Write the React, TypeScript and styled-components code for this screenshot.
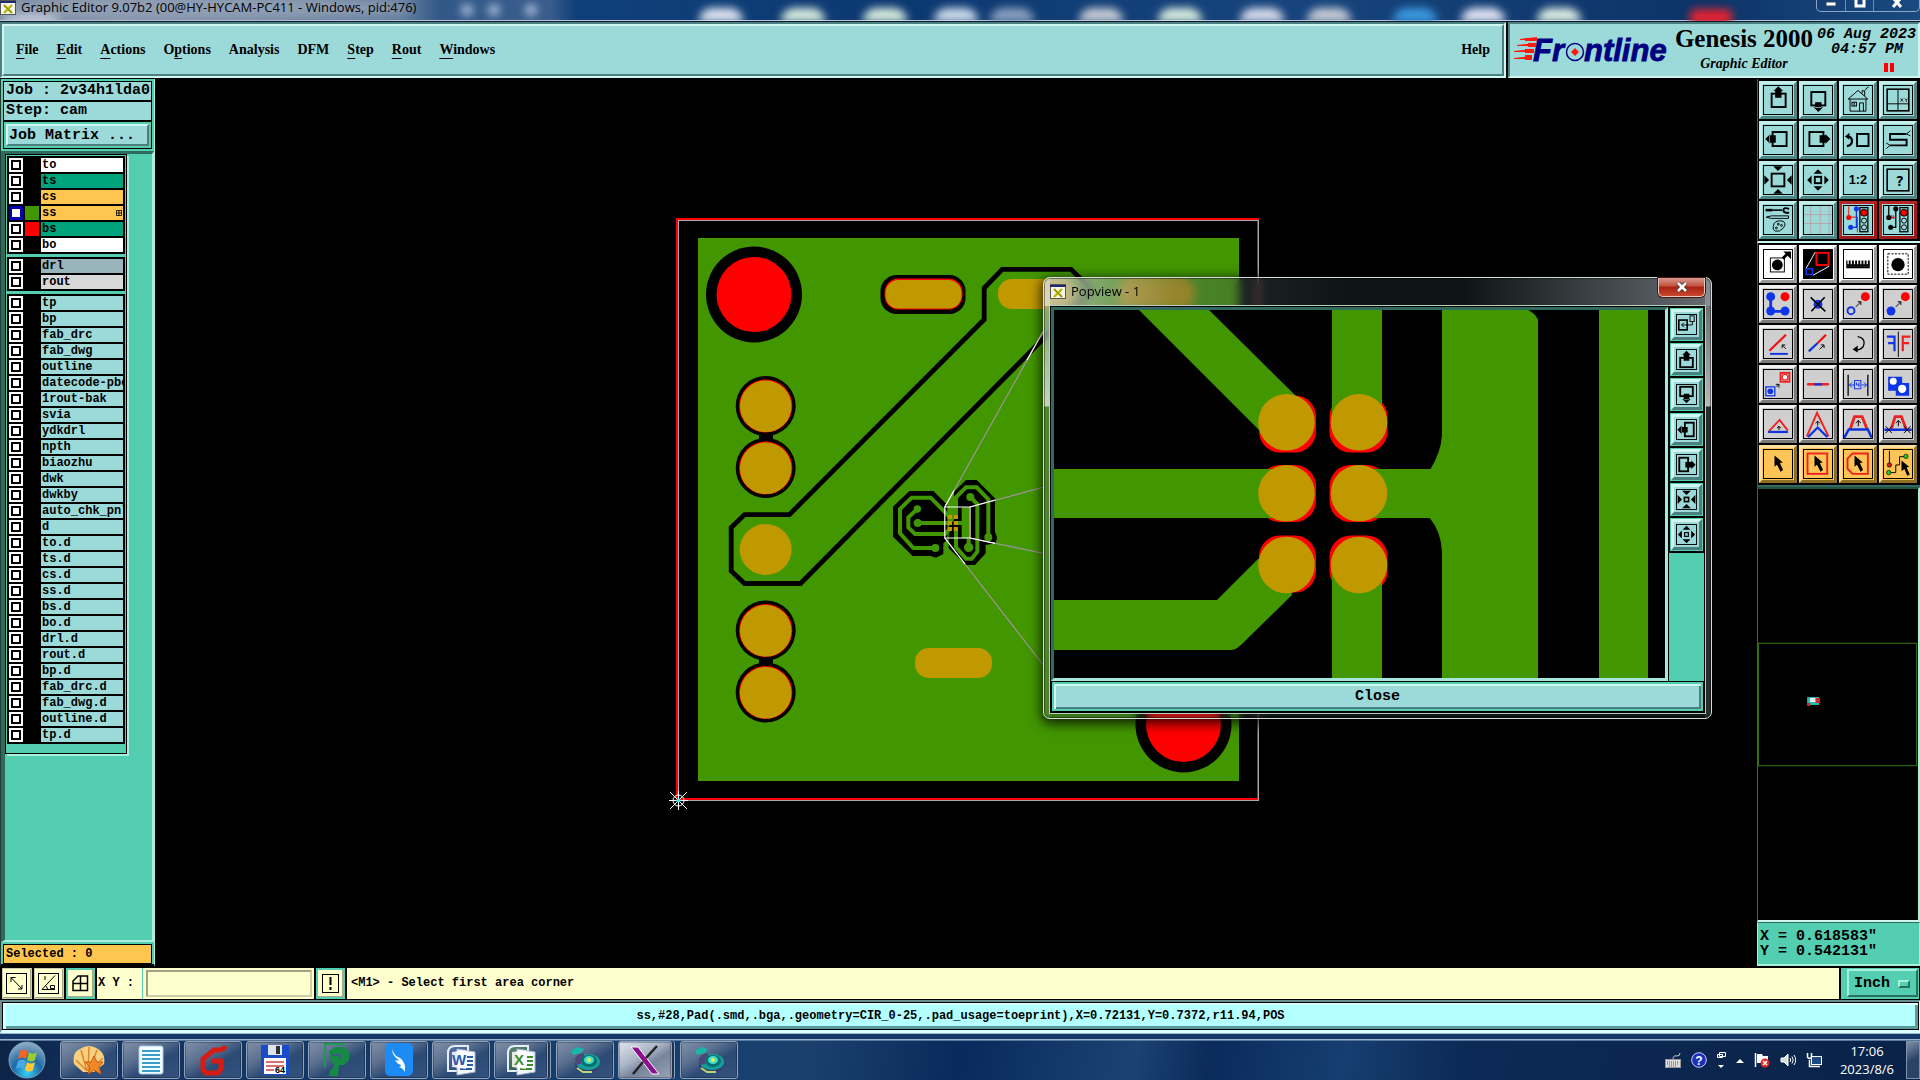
import React from "react";
import styled, { createGlobalStyle, css } from "styled-components";

const MONO = `"Liberation Mono", "DejaVu Sans Mono", monospace`;
const SERIF = `"Liberation Serif", serif`;
const UI = `"Open Sans", "Noto Sans", sans-serif`;

const c = {
  aqua: "#9cdada",
  aquaLight: "#d0f6f2",
  aquaDark: "#4c8080",
  teal: "#54ceb0",
  tealLight: "#a8f0dc",
  tealDark: "#2f6a5c",
  cream: "#ffffce",
  creamDark: "#a9a98a",
  orange: "#ffc64f",
  green: "#429600",
  gold: "#c09800",
  red: "#ff0000",
  blue: "#0f35e8",
};

const Global = createGlobalStyle`
  *, *::before, *::after { box-sizing: border-box; }
  body { margin: 0; background: #000; overflow: hidden; }
  button, input, select { margin: 0; padding: 0; border: 0; border-radius: 0; background: none; color: inherit; font: inherit; outline: 0; }
`;

const bevel = (w: number, light: string, dark: string) => css`
  border: ${w}px solid;
  border-color: ${light} ${dark} ${dark} ${light};
`;

/* ---------- frame ---------- */

const Screen = styled.div`
  display: flex;
  flex-direction: column;
  height: 100vh;
  background: #000;
  color: #000;
  font: bold 12px/14px ${MONO};
`;

const TitleBar = styled.header`
  position: relative;
  display: flex;
  align-items: flex-start;
  flex: none;
  height: 22px;
  overflow: hidden;
  border-bottom: 1px solid #0a1a30;
  box-shadow: inset 0 -1px 0 #b8c8dc;
  background: linear-gradient(90deg, #7888a0 0, #8794aa 120px, #67809f 400px, #325888 440px, #3a5d8c 550px, #10407a 575px, #0c3870 900px, #17447c 1300px, #0c3468 1700px, #1a4a80 100%);
  svg, h1 { z-index: 1; }
`;

const TitleText = styled.h1`
  flex: 1;
  margin: 0;
  padding-left: 5px;
  font: 13px/15px ${UI};
  white-space: nowrap;
`;

const Blurs = styled.svg`
  position: absolute;
  inset: 0;
  width: 100%;
  height: 21px;
  && { z-index: 0; }
`;

const WindowButtons = styled.div`
  display: flex;
  height: 12px;
  border: 1px solid #8ea6c4;
  border-top: 0;
  border-radius: 0 0 5px 5px;
  z-index: 1;
`;

const WindowButton = styled.button<{ $w: number }>`
  display: flex;
  justify-content: center;
  width: ${(p) => p.$w}px;
  & + & { border-left: 1px solid #6f8bb0; }
`;

const TopRow = styled.div`
  display: flex;
  flex: none;
  height: 57px;
  background: #000;
  border-bottom: 1px solid #000;
`;

const Sunken = styled.div`
  ${bevel(2, c.aquaDark, c.aquaLight)}
`;

const MenuFrame = styled(Sunken)`
  flex: 1;
  margin-right: 2px;
`;

const MenuBar = styled.nav`
  display: flex;
  align-items: center;
  gap: 18px;
  height: 100%;
  padding: 0 12px;
  background: ${c.aqua};
  ${bevel(2, c.aquaLight, c.aquaDark)}
  font: bold 14px/18px ${SERIF};
`;

const MenuButton = styled.button<{ $end?: boolean }>`
  margin-left: ${(p) => (p.$end ? "auto" : "0")};
  white-space: nowrap;
  u { text-underline-offset: 4px; text-decoration-thickness: 1px; }
`;

const BrandFrame = styled(Sunken)`
  display: flex;
  width: 412px;
  padding: 1px 2px 0 3px;
  background: ${c.aqua};
`;

const BrandLogo = styled.svg`
  flex: none;
  width: 162px;
  height: 46px;
`;

const BrandNames = styled.div`
  display: flex;
  flex-direction: column;
  align-items: center;
  width: 138px;
  font: bold 25px/28px ${SERIF};
  white-space: nowrap;
  em { font-size: 14px; line-height: 22px; }
`;

const Clock = styled.div`
  display: flex;
  flex: 1;
  flex-direction: column;
  align-items: flex-end;
  padding-top: 2px;
  font: italic bold 15px/15px ${MONO};
  white-space: nowrap;
  span + span { padding-right: 13px; }
`;

const Pause = styled.i`
  width: 10px;
  height: 9px;
  margin: 6px 22px 0 0;
  border: solid ${c.red};
  border-width: 0 4px;
`;

const Main = styled.main`
  display: flex;
  flex: 1;
  min-height: 0;
`;

/* ---------- left column ---------- */

const Side = styled.aside`
  display: flex;
  flex-direction: column;
  width: 155px;
  border: solid;
  border-width: 0 1px 3px 1px;
  border-color: #1c3c34 ${c.tealLight} #000 #1c3c34;
  background: ${c.teal};
`;

const Info = styled.div<{ $bg?: string; $small?: boolean }>`
  height: 20px;
  margin: 0 2px;
  padding-left: 2px;
  border: 1px solid #000;
  background: ${(p) => p.$bg || c.aqua};
  font: bold ${(p) => (p.$small ? 12 : 15)}px/18px ${MONO};
  white-space: pre;
  overflow: hidden;
`;

const InfoStack = styled.div`
  padding-top: 2px;
`;

const MatrixBox = styled.div`
  margin: 0 2px 2px;
  padding: 2px;
  border: 1px solid #000;
`;

const MatrixButton = styled.button`
  width: 100%;
  height: 22px;
  padding-left: 1px;
  background: ${c.aqua};
  ${bevel(2, c.aquaLight, c.aquaDark)}
  font: bold 15px/17px ${MONO};
  text-align: left;
`;

const LayerArea = styled.div`
  flex: 1;
  min-height: 0;
  margin-bottom: 2px;
  border: solid;
  border-width: 3px 2px 2px 4px;
  border-color: ${c.tealDark} ${c.tealLight} ${c.tealLight} ${c.tealDark};
`;

const LayerList = styled.div`
  display: flex;
  flex-direction: column;
  gap: 3px;
  width: 122px;
  padding: 1px 1px 9px;
  border: 1px solid #000;
  box-shadow: 2px 2px 0 ${c.tealLight};
`;

const LayerGroup = styled.div`
  display: flex;
  flex-direction: column;
  gap: 2px;
  padding: 2px;
  background: #000;
`;

const LayerRow = styled.label`
  display: flex;
  gap: 2px;
  height: 14px;
`;

const LayerTick = styled.input`
  appearance: none;
  flex: none;
  width: 14px;
  height: 14px;
  border: 2px solid #fff;
  background: #000;
  box-shadow: inset 0 0 0 2px #000, inset 0 0 0 8px #fff;
  &:checked { border-color: #0000b0; box-shadow: inset 0 0 0 1px #0000b0, inset 0 0 0 8px #fff; }
`;

const Swatch = styled.span<{ $bg?: string }>`
  flex: none;
  width: 14px;
  background: ${(p) => p.$bg || "#000"};
`;

const LayerName = styled.span<{ $bg: string }>`
  display: flex;
  flex: 1;
  align-items: center;
  justify-content: space-between;
  min-width: 0;
  overflow: hidden;
  padding: 0 1px;
  background: ${(p) => p.$bg};
  white-space: nowrap;
`;

/* ---------- centre ---------- */

const Canvas = styled.section`
  position: relative;
  flex: 1;
  min-width: 0;
  overflow: hidden;
`;

const Board = styled.svg`
  display: block;
  width: 100%;
  height: 100%;
`;

const Pop = styled.section`
  position: absolute;
  left: 888px;
  top: 198px;
  display: flex;
  flex-direction: column;
  width: 669px;
  height: 442px;
  padding: 0 6px 5px;
  border: 1px solid #d8dcd8;
  border-radius: 7px;
  background:
    linear-gradient(90deg, rgba(255,255,255,.55) 0, rgba(255,255,255,.1) 130px, rgba(255,255,255,0) 300px, rgba(255,255,255,0) 420px, rgba(160,165,175,.6) 100%) 0 0 / 100% 28px no-repeat,
    linear-gradient(180deg, rgba(255,255,255,.25) 0, rgba(255,255,255,.7) 128px, rgba(255,255,255,.1) 129px, rgba(255,255,255,.1) 100%) 0 0 / 6px 100% no-repeat,
    linear-gradient(180deg, rgba(255,255,255,.3) 0, rgba(255,255,255,.7) 128px, rgba(255,255,255,.1) 129px, rgba(255,255,255,.1) 100%) 100% 0 / 6px 100% no-repeat,
    rgba(40, 60, 60, .35);
  backdrop-filter: blur(5px);
  box-shadow: 0 3px 12px 2px rgba(0,0,0,.75), inset 0 0 0 1px rgba(0,0,0,.4);
`;

const PopTitle = styled.header`
  display: flex;
  flex: none;
  align-items: flex-start;
  height: 28px;
`;

const PopName = styled.h2`
  flex: 1;
  margin: 0;
  padding: 5px 0 0 5px;
  font: 13px/16px ${UI};
`;

const PopIcon = styled.span`
  padding-top: 6px;
`;

const PopX = styled.button`
  display: flex;
  align-items: center;
  justify-content: center;
  width: 47px;
  height: 19px;
  border: 1px solid #e8c8c0;
  border-top: 0;
  border-radius: 0 0 5px 5px;
  background: linear-gradient(#d89a90 0, #c4503c 45%, #a82010 50%, #c84830 100%);
  box-shadow: 0 0 0 1px #401810;
`;

const PopBody = styled.div`
  display: flex;
  flex: 1;
  flex-direction: column;
  min-height: 0;
  border: 1px solid #000;
  box-shadow: 0 0 0 1px #b8d0c0;
  background: #000;
`;

const PopRow = styled.div`
  display: flex;
  flex: 1;
  min-height: 0;
`;

const PopView = styled.div`
  flex: 1;
  min-width: 0;
  border: solid;
  border-width: 3px;
  border-color: ${c.tealDark} #a8e8dc #a8e8dc ${c.tealDark};
`;

const PopTools = styled.div`
  display: flex;
  flex-direction: column;
  gap: 2px;
  width: 35px;
  margin-left: 1px;
  padding-top: 1px;
  background: linear-gradient(#000 0 246px, ${c.teal} 246px);
`;

const PopTool = styled.button`
  flex: none;
  width: 33px;
  height: 33px;
  margin-left: 1px;
  padding: 1px;
  background: ${c.teal};
  svg { display: block; width: 31px; height: 31px; padding: 2px; background: ${c.aqua}; ${bevel(3, c.aquaLight, c.aquaDark)} }
`;

const PopClose = styled.button`
  height: 29px;
  margin: 1px;
  border: 2px solid ${c.teal};
  background: ${c.aqua};
  box-shadow: inset 2px 2px 0 ${c.aquaLight}, inset -2px -2px 0 ${c.aquaDark};
  font: bold 15px/17px ${MONO};
`;

/* ---------- right column ---------- */

const Right = styled.aside`
  display: flex;
  flex-direction: column;
  width: 163px;
`;

const Tools = styled.div<{ $grey?: boolean }>`
  display: grid;
  flex: none;
  grid-template-columns: repeat(4, 38px);
  gap: 2px;
  padding: 2px 0 2px 1px;
  border-left: 1px solid ${(p) => (p.$grey ? "#555" : c.tealDark)};
  border-bottom: 2px solid ${(p) => (p.$grey ? c.tealDark : c.aquaLight)};
  background: #000;
`;

type Tone = "aqua" | "alert" | "white" | "grey" | "orange";
const tones: Record<Tone, [string, string, string]> = {
  aqua: [c.aqua, "#c4efec", "#4f8585"],
  alert: [c.aqua, "#b82424", "#a01818"],
  white: ["#fff", "#fff", "#999"],
  grey: ["#cfcfcf", "#f0f0f0", "#7a7a7a"],
  orange: ["#ffc456", "#ffdf9c", "#8f7020"],
};

const Tool = styled.button<{ $tone: Tone }>`
  width: 38px;
  height: 38px;
  padding: 1px;
  background: ${(p) => tones[p.$tone][0]};
  ${(p) => bevel(3, tones[p.$tone][1], tones[p.$tone][2])}
  svg { display: block; width: 30px; height: 30px; border: 1px solid #000; }
`;

const Overview = styled.svg`
  flex: 1;
  min-height: 0;
  width: 100%;
  border: solid;
  border-width: 2px 2px 2px 1px;
  border-color: #235044 ${c.tealLight} ${c.aquaLight} ${c.tealDark};
`;

const Coords = styled.div`
  flex: none;
  height: 44px;
  margin-bottom: 1px;
  padding: 6px 2px 0;
  background: ${c.teal};
  border: solid;
  border-width: 1px 1px 2px 1px;
  border-color: ${c.tealDark} ${c.tealLight} ${c.tealLight} ${c.tealLight};
  font: bold 15px/15px ${MONO};
  white-space: pre;
`;

/* ---------- bottom rows ---------- */

const PromptRow = styled.div`
  display: flex;
  flex: none;
  height: 33px;
  padding: 1px 1px 1px 2px;
  gap: 2px;
  background: #000;
`;

const SmallTool = styled.button<{ $framed?: boolean }>`
  flex: none;
  width: ${(p) => (p.$framed ? 29 : 30)}px;
  height: 31px;
  border: ${(p) => (p.$framed ? `2px solid ${c.teal}` : "1px solid #cdcda8")};
  padding: ${(p) => (p.$framed ? "3px 2px" : "4px 3px")};
  background: ${c.cream};
  box-shadow: inset -1px -1px 0 ${c.creamDark};
  svg { display: block; width: 21px; height: 21px; }
`;

const PromptField = styled.div`
  display: flex;
  flex: none;
  align-items: center;
  background: ${c.cream};
  label { width: 46px; padding-left: 1px; border-right: 1px solid ${c.teal}; font: bold 12px/31px ${MONO}; }
  input { width: 166px; height: 27px; margin: 0 2px 0 3px; padding: 0 5px; border: 2px solid; border-color: #a0a084 #cdcda8 #cdcda8 #a0a084; }
`;

const Prompt = styled.output`
  flex: 1;
  padding-left: 4px;
  background: ${c.cream};
  font: bold 12px/31px ${MONO};
`;

const UnitBox = styled.div`
  flex: none;
  width: 78px;
  padding: 1px 1px 1px 6px;
  background: ${c.teal};
`;

const UnitFrame = styled.div`
  display: flex;
  align-items: center;
  height: 28px;
  padding: 2px 6px 0 5px;
  ${bevel(2, c.tealLight, "#287060")}
  select { flex: 1; appearance: none; min-width: 0; font: bold 15px/20px ${MONO}; }
`;

const UnitMark = styled.i`
  flex: none;
  width: 12px;
  height: 8px;
  ${bevel(2, c.tealLight, "#287060")}
`;

const StatusRow = styled.div`
  flex: none;
  height: 33px;
  border: solid;
  border-width: 2px 1px 3px 2px;
  border-color: #6a8f90 #d8ffff #d8ffff #6a8f90;
`;

const Status = styled.output`
  display: block;
  height: 100%;
  border: 1px solid #000;
  box-shadow: inset 3px 2px 0 #d8ffff, inset -3px -3px 0 #5a9a9a;
  background: #b4ffff;
  font: bold 12px/27px ${MONO};
  text-align: center;
`;

const Edge = styled.div`
  flex: none;
  height: 7px;
  border: solid #9fb4cc;
  border-width: 1px 0;
  background: #12386c;
`;

const TaskBar = styled.footer`
  display: flex;
  flex: none;
  align-items: flex-start;
  gap: 4px;
  height: 40px;
  padding-left: 8px;
  border-top: 1px solid #58779c;
  background: linear-gradient(100deg, #0d2346 0, #123261 6%, #16406e 36%, #1b406e 42%, #082a5c 50%, #1b4272 59%, #0a2b5c 63%, #163e70 70%, #0c2a56 76%, #0a2248 100%);
`;

const Orb = styled.button`
  width: 38px;
  height: 38px;
  margin-right: 10px;
  svg { display: block; }
`;

const Task = styled.button<{ $on?: boolean; $stack?: boolean }>`
  display: flex;
  align-items: center;
  justify-content: center;
  width: ${(p) => (p.$stack ? 54 : 58)}px;
  height: 38px;
  margin-right: ${(p) => (p.$stack ? 4 : 0)}px;
  border: 1px solid #8fa2ba;
  border-radius: 3px;
  background: ${(p) =>
    p.$on
      ? "linear-gradient(150deg, #dfe5ee 0, #aab4c6 40%, #76849c 60%, #98a4b8 100%)"
      : "linear-gradient(150deg, #8090a8 0, #5c7090 35%, #2b4a74 60%, #33527e 100%)"};
  box-shadow: inset 0 0 0 1px rgba(0,0,0,.25)${(p) => (p.$stack ? ", 2px 0 0 #1b3254, 3px 0 0 #8fa2ba" : "")};
`;

const Tray = styled.div`
  display: flex;
  align-items: center;
  gap: 10px;
  margin-left: auto;
`;

const TrayTime = styled.time`
  width: 58px;
  margin-left: 6px;
  color: #fff;
  font: 13px/18px ${UI};
  text-align: center;
`;

const ShowDesktop = styled.button`
  width: 14px;
  height: 38px;
  border: 1px solid #7f93ac;
  background: linear-gradient(150deg, #8090a8, #2a4468 50%);
`;

/* ---------- drawings ---------- */

const AppIcon = () => (
  <svg width="16" height="15" viewBox="0 0 16 15">
    <rect x=".5" y=".5" width="15" height="14" fill="#f4f4ee" stroke="#555" />
    <path d="M0 1h16v2H0z" fill="#202a70" />
    <path d="M4 5l8 8M12 5l-8 8" stroke="#b8b800" strokeWidth="2.4" />
    <path d="M4 5l8 8" stroke="#707000" strokeWidth=".8" />
  </svg>
);

const blobs: [number, string][] = [
  [720, "#dfe6f2"], [802, "#d8ecdf"], [884, "#d8ecdf"], [955, "#cfdcec"], [1011, "#8aa0c0"], [1100, "#c8ccd6"],
  [1179, "#d8ecdf"], [1261, "#d8dcec"], [1328, "#c8ccd6"], [1414, "#3a9ae0"], [1482, "#e2e6f4"], [1558, "#dfeee4"],
];

const TitleBlurs = () => (
  <Blurs aria-hidden="true">
    <defs><filter id="soft" x="-50%" y="-50%" width="200%" height="200%"><feGaussianBlur stdDeviation="4" /></filter></defs>
    <g filter="url(#soft)">
      <ellipse cx="200" cy="8" rx="215" ry="10" fill="#94a2b6" opacity=".8" />
      <ellipse cx="30" cy="20" rx="30" ry="5" fill="#c8d0e0" />
      {[467, 494, 531].map((x) => <circle key={x} cx={x} cy="10" r="6" fill="#a8bcd8" />)}
      {blobs.map(([x, f]) => <path key={x} d={`M${x - 22} 22l4-10l8-4h22l8 4l4 10z`} fill={f} />)}
      <rect x="1690" y="9" width="42" height="16" rx="5" fill="#e02030" />
    </g>
  </Blurs>
);

const logoText = {
  fill: "#000080", stroke: "#000080", strokeWidth: 0.8, fontFamily: "Liberation Sans, Arial, sans-serif",
  fontStyle: "italic", fontWeight: "bold", fontSize: 31,
};

const FrontlineLogo = () => (
  <BrandLogo viewBox="0 0 162 46" role="img" aria-label="Frontline">
    <g fill="#ff1a10">
      <path d="M7 15h17v-3l-17 2zM4 21h18v-3l-18 2zM1 27h20v-3L1 26zM1 34h18v-3L1 33z" />
      <path d="M12 13h11l2 3H12zM15 18h8v4h-8zM12 24h9v4h-9zM12 30h7v5h-7z" />
    </g>
    <text x="20" y="36" {...logoText}>Fr</text>
    <text x="71" y="36" {...logoText}>ntline</text>
    <circle cx="62" cy="27" r="8.500" fill={c.aqua} stroke="#000080" strokeWidth="1.500" />
    <path d="M62 23l4 4l-4 4l-4-4z" fill="#ff1a10" />
  </BrandLogo>
);

const tri = {
  up: (x: number, y: number, s = 12) => `M${x} ${y}l${s} ${s}h${-2 * s}z`,
  down: (x: number, y: number, s = 12) => `M${x} ${y}l${s} ${-s}h${-2 * s}z`,
  left: (x: number, y: number, s = 12) => `M${x} ${y}l${s} ${s}v${-2 * s}z`,
  right: (x: number, y: number, s = 12) => `M${x} ${y}l${-s} ${s}v${-2 * s}z`,
};

const Box = (p: { x: number; y: number; w: number; h: number; s?: number; col?: string }) => (
  <rect x={p.x} y={p.y} width={p.w} height={p.h} fill="none" stroke={p.col || "#000"} strokeWidth={p.s || 6} />
);

const upIcon = <><Box x={25} y={25} w={44} h={42} /><path d={tri.up(46, 2, 15) + "M36 16h20v22H36z"} /></>;
const downIcon = <><Box x={24} y={20} w={44} h={42} /><path d={tri.down(46, 83, 15) + "M36 52h20v18H36z"} /></>;
const leftIcon = <><Box x={28} y={20} w={44} h={44} /><path d={tri.left(5, 42, 15) + "M18 30h20v24H18z"} /></>;
const rightIcon = <><Box x={18} y={20} w={44} h={44} /><path d={tri.right(84, 42, 15) + "M50 30h20v24H50z"} /></>;
const zoomInIcon = <><Box x={25} y={25} w={40} h={40} /><path d={tri.down(45, 17, 15) + tri.up(45, 73, 15) + tri.right(17, 45, 15) + tri.left(73, 45, 15)} /></>;
const zoomOutIcon = <><Box x={35} y={35} w={20} h={20} s={6} /><path d={tri.up(45, 11, 14) + tri.down(45, 79, 14) + tri.left(11, 45, 14) + tri.right(79, 45, 14)} /></>;

/* heavier strokes, for the narrow popview buttons */
const popUp = <><Box x={18} y={38} w={54} h={40} s={8} /><path d={tri.up(45, 8, 18) + "M33 24h24v26H33z"} /></>;
const popDown = <><Box x={18} y={12} w={54} h={40} s={8} /><path d={tri.down(45, 82, 18) + "M33 42h24v24H33z"} /></>;
const popLeft = <><Box x={38} y={16} w={38} h={58} s={8} /><path d={tri.left(6, 46, 18) + "M22 34h28v24H22z"} /></>;
const popRight = <><Box x={14} y={16} w={38} h={58} s={8} /><path d={tri.right(84, 46, 18) + "M40 34h28v24H40z"} /></>;
const popIn = <><Box x={36} y={36} w={18} h={18} s={7} /><path d={tri.down(45, 26, 19) + tri.up(45, 64, 19) + tri.right(26, 45, 19) + tri.left(64, 45, 19)} /></>;
const popOut = <><Box x={37} y={37} w={16} h={16} s={5} /><path d={tri.up(45, 8, 17) + tri.down(45, 82, 17) + tri.left(8, 45, 17) + tri.right(82, 45, 17)} /></>;

const TrafficLight = () => (
  <g>
    <Box x={51} y={6} w={25} h={76} s={4} />
    <circle cx="64" cy="22" r="11" fill="#f00" stroke="#000" strokeWidth="3" />
    <circle cx="64" cy="47" r="8" fill="none" stroke="#000" strokeWidth="3" />
    <circle cx="64" cy="68" r="8" fill="none" stroke="#000" strokeWidth="3" />
  </g>
);

const cursor = "M34 18l26 22l-9 2l10 22l-8 5l-11-22l-8 7z";

const topTools: [string, Tone, React.ReactNode][] = [
  ["Pan up", "aqua", upIcon],
  ["Pan down", "aqua", downIcon],
  ["Home view", "aqua", <g fill="none" stroke="#000" strokeWidth="3"><path d="M14 42L45 15L76 42zM20 42v38h50V42M58 24v-8h8v16M68 14q4-8 10-10M50 80V54h12v26" /><rect x="26" y="52" width="14" height="12" /><path d="M33 52v12" /></g>],
  ["Coordinate view", "aqua", <><Box x={11} y={11} w={68} h={68} s={5} /><path d="M45 11v68M11 57h68" stroke="#000" strokeWidth="3" /><path d="M53 40l8 10M61 40l-8 10M66 40l5 5l5-5M71 45v6" stroke="#000" strokeWidth="2.500" fill="none" /></>],
  ["Pan left", "aqua", leftIcon],
  ["Pan right", "aqua", rightIcon],
  ["Previous view", "aqua", <><Box x={42} y={26} w={36} h={38} /><path d="M10 64q16-2 16-16t-14-14" fill="none" stroke="#000" strokeWidth="7" /><path d="M4 34l14-12v22z" /></>],
  ["Snake view", "aqua", <><path d="M72 26H20v18h52v18H20" fill="none" stroke="#000" strokeWidth="6" /><path d="M72 26l12-10M72 26l12 6M20 62l-12-8M20 62l-12 10" stroke="#000" strokeWidth="3" /></>],
  ["Zoom in", "aqua", zoomInIcon],
  ["Zoom out", "aqua", zoomOutIcon],
  ["One to two", "aqua", <text x="45" y="59" fontSize="40" fontWeight="bold" textAnchor="middle" fontFamily="Liberation Sans, sans-serif">1:2</text>],
  ["Query", "aqua", <><Box x={11} y={11} w={68} h={68} s={5} /><text x="50" y="63" fontSize="46" fontWeight="bold" textAnchor="middle" fontFamily="DejaVu Sans Mono, monospace">?</text></>],
  ["Settings", "aqua", <g fill="none" stroke="#000"><path d="M6 14h22" strokeWidth="8" /><path d="M28 14h30" strokeWidth="5" /><path d="M80 10q-18-6-18 4t18 8" strokeWidth="6" /><path d="M8 36l16-4h54v8H24z" strokeWidth="3" /><path d="M30 66q2-22 28-18q16 6 4 22q-12 14-26 10q-8-4-6-14z" strokeWidth="3" /><circle cx="46" cy="58" r="3" strokeWidth="3" /><circle cx="40" cy="70" r="3" strokeWidth="3" /><circle cx="56" cy="62" r="3" strokeWidth="3" /></g>],
  ["Grid", "aqua", <path d="M22 0v90M52 0v90M80 0v90M0 28h90M0 56h90" stroke="#b9a5ac" strokeWidth="3" />],
  ["Net colours", "alert", <><path d="M16 2v34M16 36h27v48" stroke="#f00" strokeWidth="3" fill="none" /><path d="M40 10v58H22" stroke={c.blue} strokeWidth="4" fill="none" /><circle cx="16" cy="37" r="8" fill="#f00" /><circle cx="40" cy="10" r="8" fill={c.blue} /><circle cx="22" cy="68" r="8" fill={c.blue} /><TrafficLight /></>],
  ["Net check", "alert", <><path d="M16 0v37M38 10v58H22" stroke="#000" strokeWidth="4" fill="none" /><path d="M22 37h16M24 30v12M30 30v12" stroke="#f00" strokeWidth="3" /><circle cx="16" cy="37" r="8" /><circle cx="38" cy="10" r="8" /><circle cx="22" cy="68" r="8" /><TrafficLight /></>],
];

const dot = (x: number, y: number, f: string, r = 14) => <circle cx={x} cy={y} r={r} fill={f} />;
const arrow = (x: number, y: number, s = 16) => <path d={`M${x} ${y}l${s}-${s}M${x + s} ${y - s + 10}v-10h-10`} fill="none" stroke="#000" strokeWidth="3" />;

const editTools: [string, Tone, React.ReactNode][] = [
  ["Move symbol", "white", <><Box x={21} y={26} w={44} h={44} s={3} />{dot(43, 48, "#000", 17)}<path d="M60 28l14-14" stroke="#000" strokeWidth="9" /><path d="M62 6h24v24z" /></>],
  ["Popview", "white", <><rect x="0" y="0" width="90" height="90" /><Box x={40} y={10} w={38} h={38} s={6} col="#f00" /><Box x={8} y={60} w={20} h={18} s={5} col={c.blue} /><path d="M8 58L36 8M30 80l50-28" stroke="#fff" strokeWidth="3" /></>],
  ["Measure", "white", <><path d="M8 34h74v20H8z" /><path d="M14 32v14M24 32v14M34 32v14M44 32v14M54 32v14M64 32v14M74 32v14" stroke="#fff" strokeWidth="4" /><path d="M8 56h74" stroke="#000" strokeWidth="5" /></>],
  ["Select symbol", "white", <><rect x="13" y="13" width="64" height="64" fill="none" stroke="#000" strokeWidth="3" strokeDasharray="7 4" />{dot(45, 47, "#000", 21)}</>],
  ["Add pads", "grey", <><path d="M22 22v46h46" stroke={c.blue} strokeWidth="9" fill="none" />{dot(22, 22, c.blue)}{dot(22, 67, c.blue)}{dot(67, 67, c.blue)}{dot(67, 22, "#f00")}</>],
  ["Delete", "grey", <>{dot(45, 46, c.blue, 14)}<path d="M22 24l46 44M66 24L24 68" stroke="#000" strokeWidth="5" /></>],
  ["Copy", "grey", <><circle cx="23" cy="66" r="11" fill="none" stroke={c.blue} strokeWidth="6" />{arrow(38, 54)}{dot(68, 22, "#f00")}</>],
  ["Move", "grey", <>{dot(23, 67, c.blue)}{arrow(38, 54)}{dot(68, 22, "#f00")}</>],
  ["Rotate line", "grey", <><path d="M18 66L70 16" stroke="#e11" strokeWidth="7" /><path d="M20 76h56" stroke="#1133dd" strokeWidth="6" /><path d="M70 60L58 48M58 58V48h10" fill="none" stroke="#000" strokeWidth="3" /></>],
  ["Stretch line", "grey", <><path d="M16 68l28-26" stroke="#1133dd" strokeWidth="7" /><path d="M44 42l26-26" stroke="#e11" strokeWidth="7" />{arrow(50, 62, 14)}</>],
  ["Rotate", "grey", <><path d="M44 22q22 4 20 22t-24 20" fill="none" stroke="#000" strokeWidth="4" /><path d="M28 62l16-12v22z" /></>],
  ["Mirror", "grey", <><path d="M46 6v80" stroke="#000" strokeWidth="3" /><path d="M10 22h24v46M14 42h20" fill="none" stroke={c.blue} strokeWidth="7" /><path d="M84 22H60v46M80 42H60" fill="none" stroke="#e22" strokeWidth="7" /></>],
  ["Transform", "grey", <><Box x={7} y={54} w={28} h={28} s={4} col={c.blue} />{dot(21, 68, c.blue, 9)}{arrow(40, 54, 8)}<Box x={53} y={10} w={28} h={28} s={6} col="#e22" /><circle cx="67" cy="24" r="9" fill="#fff" stroke="#e22" strokeWidth="4" /></>],
  ["Merge lines", "grey", <><path d="M14 46h62" stroke="#e22" strokeWidth="8" strokeLinecap="round" /><path d="M34 46h24" stroke={c.blue} strokeWidth="7" /></>],
  ["Spacing", "grey", <><path d="M14 16v66M76 16v66" stroke="#000" strokeWidth="4" /><Box x={34} y={34} w={20} h={26} s={3} col={c.blue} /><path d="M18 48h16M56 48h16M26 40l-8 8l8 8M64 40l8 8l-8 8M40 40v8h8M48 40v14" fill="none" stroke={c.blue} strokeWidth="3" /></>],
  ["Combine", "grey", <><path d="M14 22h44v20h22v40H38V66H14z" fill={c.blue} /><circle cx="30" cy="36" r="11" fill="#fff" /><circle cx="58" cy="60" r="13" fill="#fff" /></>],
  ["Triangle", "grey", <><path d="M16 68l34-36l26 34" fill="none" stroke="#e22" strokeWidth="6" /><path d="M14 70h62" stroke="#1133dd" strokeWidth="7" /><path d="M48 64V52M42 58l6-6l6 6" fill="none" stroke="#000" strokeWidth="3" /></>],
  ["Peak", "grey", <><path d="M10 84L42 10L78 84" fill="none" stroke="#e22" strokeWidth="6" /><path d="M14 86l30-30l30 30" fill="none" stroke="#1133dd" strokeWidth="7" /><path d="M44 50V36M37 43l7-7l7 7" fill="none" stroke="#000" strokeWidth="3" /></>],
  ["Trapezoid", "grey", <><path d="M20 62l14-40h24l16 40" fill="none" stroke="#e22" strokeWidth="9" /><path d="M2 88l14-26h60l12 26" fill="none" stroke="#1133dd" strokeWidth="8" /><path d="M46 52V34M38 42l8-8l8 8" fill="none" stroke="#000" strokeWidth="3" /></>],
  ["Cut trapezoid", "grey", <><path d="M24 60l12-38h20l14 38" fill="none" stroke="#e22" strokeWidth="9" /><path d="M2 63h86" stroke="#1133dd" strokeWidth="8" /><path d="M46 52V34M38 42l8-8l8 8M6 52l20 22M26 52L6 74M64 52l20 22M84 52L64 74" fill="none" stroke="#000" strokeWidth="3" /></>],
  ["Select", "orange", <path d={cursor} />],
  ["Select in box", "orange", <><Box x={12} y={12} w={62} h={64} s={6} col="#e22" /><path d={cursor} /></>],
  ["Select in polygon", "orange", <><path d="M28 12h48v64H28L12 60V28z" fill="none" stroke="#e22" strokeWidth="6" /><path d={cursor} /></>],
  ["Select net", "orange", <><path d="M18 4v44M18 72h20V48h12V22h20" fill="none" stroke="#000" strokeWidth="3" /><circle cx="18" cy="48" r="7" fill="#c22" stroke="#000" strokeWidth="2" /><circle cx="16" cy="72" r="7" fill="#2c2" stroke="#000" strokeWidth="2" /><circle cx="70" cy="21" r="7" fill="#2c2" stroke="#000" strokeWidth="2" /><path d="M56 34l24 20l-8 2l10 22l-8 4l-9-21l-9 7z" /></>],
];

const popTools: [string, React.ReactNode][] = [
  ["Overview", <><Box x={12} y={26} w={36} h={42} s={7} /><Box x={60} y={8} w={18} h={24} s={4} /><path d="M24 47h46V32M34 37l-10 10l10 10" fill="none" stroke="#000" strokeWidth="4" /></>],
  ["Pan up", popUp], ["Pan down", popDown], ["Pan left", popLeft], ["Pan right", popRight], ["Zoom in", popIn], ["Zoom out", popOut],
];

const BoardDrawing = () => (
  <Board viewBox="155 79 1602 888" preserveAspectRatio="xMinYMin meet" role="img" aria-label="Board layer view">
    <rect x="677" y="219" width="581" height="580" fill="none" stroke="#f00" strokeWidth="2" />
    <rect x="678.5" y="220.5" width="580" height="580" fill="none" stroke="#b0a8a8" strokeWidth="1" />
    <rect x="698" y="238" width="541" height="543" fill={c.green} />
    {[[754, 294.5], [1183.5, 724.5]].map(([x, y]) => (
      <g key={x}><circle cx={x} cy={y} r="48" /><circle cx={x} cy={y} r="37.5" fill="#f00" /></g>
    ))}
    <rect x="880.5" y="275" width="85" height="39" rx="16" />
    <rect x="884.5" y="278.5" width="78" height="31" rx="14" fill="#f00" />
    <rect x="885.5" y="280" width="76" height="28.5" rx="13" fill={c.gold} />
    {[406, 630.5].map((y) => (
      <g key={y}>
        <rect x="759" y={y + 25} width="14" height="12" />
        {[y, y + 62].map((cy) => (
          <g key={cy}><circle cx="765.7" cy={cy} r="30" /><circle cx="765.7" cy={cy} r="26.6" fill="#f00" /><circle cx="765.7" cy={cy + 0.3} r="25.8" fill={c.gold} /></g>
        ))}
      </g>
    ))}
    <ellipse cx="765.7" cy="549.5" rx="26" ry="25.5" fill={c.gold} />
    <path d="M1045 337L800.5 583.5H744.6L731.2 570.9V527.6L744.6 514.6H789.4L984.2 319.4V288L1002.2 269.3H1071L1088 286V294Z" fill="none" stroke="#000" strokeWidth="4.8" />
    <rect x="998" y="279" width="78" height="30" rx="14" fill={c.gold} />
    <rect x="1117" y="279" width="78" height="30" rx="14" fill={c.gold} />
    <rect x="915" y="648" width="77" height="30" rx="14" fill={c.gold} />
    <g transform="translate(860 460) scale(.33333)" fill="none" stroke={c.green} strokeWidth="12">
      <path d="M99 140L148 93H220L262 135V240L250 250V282L228 293L212 288H158L99 230Z" fill="#000" stroke="none" />
      <path d="M318 60H350L405 115V215L411 232L408 247L398 251L377 255V280L345 315H318L266 265V200L282 180V96Z" fill="#000" stroke="none" />
      <path d="M268 170L212 113H155L120 147V220L160 264H226" />
      <path d="M172 147L145 172V202L165 222H255L268 208M173 189H265" />
      <path d="M288 172V112L318 82H350L385 118V232M331 111L352 132V275L335 296H318L288 262V207" />
      <path d="M292 189H318M326 262V235" />
      <path d="M318 142V235" strokeWidth="26" />
      <g fill={c.green} stroke="none"><circle cx="172" cy="147" r="11" /><circle cx="173" cy="189" r="12" /><circle cx="226" cy="264" r="12" /><circle cx="385" cy="232" r="12" /><circle cx="331" cy="111" r="12" /><circle cx="326" cy="262" r="14" /></g>
      <g fill={c.gold} stroke="none">{[165, 183, 201].map((y) => <path key={y} d={`M263 ${y}h13v12h-13zM281 ${y}h13v12h-13z`} />)}</g>
    </g>
    <g fill="none" stroke="#a294a2" strokeWidth="1.2">
      <path d="M970 507V538" strokeWidth="2" />
      <path d="M944.8 507L1044 330M970 507L1044 487M970 538L1044 553.5M944.8 538L1044 666" />
      <path d="M970 507H944.8V538H970M944.8 507L954 490.5M1027 360L1044 330M970 507L995 500M970 538L995 543.3M944.8 538L965 564" stroke="#fff" />
    </g>
    <g fill="none" stroke="#fff"><circle cx="678.5" cy="800.5" r="5.5" /><path d="M670 792l17 17M687 792l-17 17M678.5 791v19M669 800.5h19" /></g>
    <circle cx="678.5" cy="800.5" r="2" fill="#2ef" />
  </Board>
);

const PopDrawing = () => (
  <Board viewBox="1 1 611 368" preserveAspectRatio="xMinYMin slice" role="img" aria-label="Magnified pads">
    <g fill="#f00">
      {[86.5, 156, 226.5].map((y) => <g key={y}><rect x="206" y={y} width="57" height="57" rx="21" /><rect x="276.5" y={y} width="58" height="57" rx="21" /></g>)}
    </g>
    <g fill={c.green}>
      <path d="M86 1H156L243 87L234 113L206 121Z" />
      <path d="M1 160H234V209H1Z" />
      <path d="M1 291H164L205 250L234 256L239 286L193 331Q184 341 178 341H1Z" />
      <path d="M279 1H329V113H279ZM279 256H329V370H279Z" />
      <path d="M307 160H377.5Q388 143 389 126V1H475Q483 5 485 11V370H389V243Q388 222 376.6 209H307Z" />
      <path d="M546 1H595V370H546Z" />
    </g>
    <g fill={c.gold}>{[113.3, 184.3, 256].map((y) => <g key={y}><circle cx="233.5" cy={y} r="28.3" /><circle cx="306" cy={y} r="28.3" /></g>)}</g>
  </Board>
);

/* ---------- data ---------- */

const menus: [string, string, string][] = [
  ["", "F", "ile"], ["", "E", "dit"], ["", "A", "ctions"], ["O", "p", "tions"], ["Analysis", "", ""],
  ["DFM", "", ""], ["", "S", "tep"], ["", "R", "out"], ["", "W", "indows"],
];

type Layer = { name: string; bg: string; swatch?: string; on?: boolean };
const layerGroups: Layer[][] = [
  [
    { name: "to", bg: "#fff" }, { name: "ts", bg: "#00a47c" }, { name: "cs", bg: c.orange },
    { name: "ss", bg: c.orange, swatch: c.green, on: true }, { name: "bs", bg: "#00a47c", swatch: c.red }, { name: "bo", bg: "#fff" },
  ],
  [{ name: "drl", bg: "#9ab4bc" }, { name: "rout", bg: "#d8d8d8" }],
  ("tp bp fab_drc fab_dwg outline datecode-pbo 1rout-bak svia ydkdrl npth biaozhu dwk dwkby auto_chk_pnl d " +
    "to.d ts.d cs.d ss.d bs.d bo.d drl.d rout.d bp.d fab_drc.d fab_dwg.d outline.d tp.d")
    .split(" ").map((name) => ({ name, bg: c.aqua })),
];

const GenesisIcon = () => (
  <svg width="34" height="30" viewBox="0 0 34 30">
    <ellipse cx="19" cy="20" rx="12" ry="8" fill="#3a3c70" /><ellipse cx="20" cy="17" rx="12" ry="8" fill="#12a098" />
    <path d="M7 14q2-5 8-6l2 4q-4 2-4 7l-5 1z" fill="#4a4878" />
    <ellipse cx="21" cy="16" rx="8" ry="6" fill="#0a6e74" /><ellipse cx="21" cy="15" rx="5" ry="4" fill="#3fe0c8" />
    <circle cx="21" cy="15" r="2" fill="#e8e850" /><path d="M3 6l6-4 7 2-3 4-8 2z" fill="#18b8a8" /><path d="M9 23l6 4 9 0" stroke="#b8d870" strokeWidth="2" fill="none" />
  </svg>
);

const OfficeIcon = ({ col, letter }: { col: string; letter: string }) => (
  <svg width="32" height="32" viewBox="0 0 32 32">
    <path d="M3 27V9q0-7 7-7h13v25z" fill={col} fillOpacity=".35" stroke="#e8eef8" strokeWidth="2" />
    <path d="M12 5l18 3v20l-18 3z" fill="#f4f8ff" stroke="#a8b8cc" />
    <path d="M22 13h6M22 17h6M22 21h6M15 25h12" stroke={col} strokeWidth="2" />
    <path d="M7 8l14-2v19L7 23z" fill="#fff" opacity=".85" />
    <text x="14" y="21" fontSize="15" fontWeight="bold" textAnchor="middle" fill={col} fontFamily="Liberation Sans, sans-serif">{letter}</text>
  </svg>
);

const tasks: { name: string; icon: React.ReactNode; on?: boolean; stack?: boolean }[] = [
  { name: "Shell", icon: <svg width="34" height="32" viewBox="0 0 34 32"><path d="M11 28L2 20Q0 8 8 5Q17-1 26 5Q34 10 32 20L22 28z" fill="#f8d080" /><path d="M15 27L4 16M15 27L9 6M16 27L17 3M17 27L25 6M18 27L31 14" stroke="#d98a28" strokeWidth="1.5" /><path d="M22 12l3 6 6 0-4 5 2 7-7-4-6 4 2-7-5-5 6 0z" fill="#f08828" stroke="#c85c10" /></svg> },
  { name: "Notes", icon: <svg width="26" height="30" viewBox="0 0 26 30"><rect x="1" y="1" width="24" height="28" rx="2" fill="#f4fbff" stroke="#a8c8e0" /><path d="M4 6h18M4 10h18M4 14h18M4 18h18M4 22h18M4 26h18" stroke="#3a9cc8" strokeWidth="2" /></svg> },
  { name: "G tool", icon: <svg width="30" height="32" viewBox="0 0 30 32"><path d="M27 2Q26 6 20 6H16L5 15V26L8 29H20L23 25V17H13" fill="none" stroke="#d41c14" strokeWidth="5" /></svg> },
  { name: "Save 64", icon: <svg width="30" height="32" viewBox="0 0 30 32"><path d="M1 1h28v30H3l-2-2z" fill="#1a4cc8" /><path d="M8 1h14v10H8z" fill="#dce4f0" /><path d="M16 2h4v8h-4z" fill="#333" /><path d="M4 14h22v16H4z" fill="#fff" /><path d="M6 18h18M6 22h18M6 26h8" stroke="#d04040" strokeWidth="1.5" /><text x="15" y="29" fontSize="9" fontWeight="bold" fontFamily="Liberation Sans, sans-serif">64</text></svg> },
  { name: "P tool", icon: <svg width="28" height="34" viewBox="0 0 28 34"><path d="M2 24V1h20" fill="none" stroke="#1d9a50" strokeWidth="2" /><path d="M6 8l6-4h9l5 5v8l-5 5h-5l-1 11H6l1-5l5-6l-4-3z" fill="#168a44" /><path d="M9 12h8v4" fill="none" stroke="#3c5c80" strokeWidth="2" /></svg> },
  { name: "Bird", icon: <svg width="30" height="34" viewBox="0 0 30 34"><rect width="28" height="33" x="1" rx="5" fill="#1c8cf4" /><path d="M8 6q2 7 8 9q6 4 5 14q-2-4-6-5q2 0 2-2q-4-1-6-5q3 1 4 0q-7-4-7-11z" fill="#fff" /></svg> },
  { name: "Word", icon: <OfficeIcon col="#2a5aa8" letter="W" /> },
  { name: "Excel", icon: <OfficeIcon col="#3c8c28" letter="X" />, stack: true },
  { name: "Genesis", icon: <GenesisIcon /> },
  { name: "X server", icon: <svg width="32" height="32" viewBox="0 0 32 32"><path d="M2 3h7l21 27h-7z" fill="#8a1090" stroke="#fff" /><path d="M28 2L17 14M14 18L4 30" stroke="#222" strokeWidth="2.5" /></svg>, on: true, stack: true },
  { name: "Genesis log", icon: <GenesisIcon /> },
];

const ToolGrid = ({ items, grey }: { items: [string, Tone, React.ReactNode][]; grey?: boolean }) => (
  <Tools $grey={grey}>
    {items.map(([name, tone, art]) => (
      <Tool key={name} $tone={tone} aria-label={name}><svg viewBox="1 1 88 88">{art}</svg></Tool>
    ))}
  </Tools>
);

export default function App() {
  return (
    <Screen>
      <Global />
      <TitleBar>
        <TitleBlurs />
        <AppIcon />
        <TitleText>Graphic Editor 9.07b2 (00@HY-HYCAM-PC411 - Windows, pid:476)</TitleText>
        <WindowButtons>
          <WindowButton $w={28} aria-label="Minimise"><svg width="12" height="8"><path d="M1 2h10v4H1z" fill="#fff" stroke="#345" /></svg></WindowButton>
          <WindowButton $w={28} aria-label="Maximise"><svg width="12" height="8"><path d="M2-2v8h8v-8" fill="none" stroke="#fff" strokeWidth="3" /></svg></WindowButton>
          <WindowButton $w={46} aria-label="Close window"><svg width="12" height="8"><path d="M2 7l8-9M10 7L2-2" stroke="#fff" strokeWidth="3" /></svg></WindowButton>
        </WindowButtons>
      </TitleBar>

      <TopRow>
        <MenuFrame>
          <MenuBar>
            {menus.map(([a, u, b]) => <MenuButton key={a + u + b}>{a}{u && <u>{u}</u>}{b}</MenuButton>)}
            <MenuButton $end>Help</MenuButton>
          </MenuBar>
        </MenuFrame>
        <BrandFrame>
          <FrontlineLogo />
          <BrandNames>Genesis 2000<em>Graphic Editor</em></BrandNames>
          <Clock><span>06 Aug 2023</span><span>04:57 PM</span><Pause /></Clock>
        </BrandFrame>
      </TopRow>

      <Main>
        <Side>
          <InfoStack>
            <Info>Job : 2v34h1lda0</Info>
            <Info>Step: cam</Info>
          </InfoStack>
          <MatrixBox><MatrixButton>Job Matrix ...</MatrixButton></MatrixBox>
          <LayerArea>
            <LayerList>
              {layerGroups.map((group, i) => (
                <LayerGroup key={i}>
                  {group.map((l) => (
                    <LayerRow key={l.name}>
                      <LayerTick type="checkbox" defaultChecked={l.on} />
                      <Swatch $bg={l.swatch} />
                      <LayerName $bg={l.bg}>
                        {l.name}
                        {l.on && <svg width="6" height="6" viewBox="0 0 7 7"><path d="M.5.5h6v6h-6zM3.5 0v7M0 3.5h7" fill="none" stroke="#000" /></svg>}
                      </LayerName>
                    </LayerRow>
                  ))}
                </LayerGroup>
              ))}
            </LayerList>
          </LayerArea>
          <Info $bg={c.orange} $small>Selected : 0</Info>
        </Side>

        <Canvas>
          <BoardDrawing />
          <Pop aria-label="Popview">
            <PopTitle>
              <PopIcon><AppIcon /></PopIcon>
              <PopName>Popview - 1</PopName>
              <PopX aria-label="Close popview"><svg width="12" height="10"><path d="M2 1l8 8M10 1L2 9" stroke="#533" strokeWidth="4.5" /><path d="M2 1l8 8M10 1L2 9" stroke="#fff" strokeWidth="2.5" /></svg></PopX>
            </PopTitle>
            <PopBody>
              <PopRow>
                <PopView><PopDrawing /></PopView>
                <PopTools>
                  {popTools.map(([name, art]) => (
                    <PopTool key={name} aria-label={name}><svg viewBox="0 0 90 90"><rect x="2" y="2" width="86" height="86" fill="none" stroke="#000" strokeWidth="4" />{art}</svg></PopTool>
                  ))}
                </PopTools>
              </PopRow>
              <PopClose>Close</PopClose>
            </PopBody>
          </Pop>
        </Canvas>

        <Right>
          <ToolGrid items={topTools} />
          <ToolGrid items={editTools} grey />
          <Overview viewBox="0 0 160 433" role="img" aria-label="Overview">
            <rect width="160" height="433" />
            <rect x="0" y="155" width="159" height="123" fill="none" stroke="#3a7a10" />
            <path d="M49 209h12v8H49z" fill="#2ab8b0" /><path d="M52 210h5v4h-5z" fill="#e8f8f8" /><path d="M58 210h4v5h-4zM49 215h3v3h-3z" fill="#e02020" />
          </Overview>
          <Coords>{'X = 0.618583"\nY = 0.542131"'}</Coords>
        </Right>
      </Main>

      <PromptRow>
        <SmallTool aria-label="Snap to line"><svg viewBox="0 0 21 21" fill="none" stroke="#000"><rect x=".5" y=".5" width="20" height="20" /><path d="M5 4.5L16 16M5 9V4.5h4.5M12 16h4v-4" /></svg></SmallTool>
        <SmallTool aria-label="Snap to angle"><svg viewBox="0 0 21 21" fill="none" stroke="#000"><rect x=".5" y=".5" width="20" height="20" /><path d="M17 2.5L4 16.5h13M7 3v4M12.5 12.5h4v3h-4zM7.5 13q2 1 2 3" /></svg></SmallTool>
        <SmallTool $framed aria-label="Snap to grid"><svg viewBox="0 0 21 21" fill="none" stroke="#000"><path d="M3 17.5V8l5-5h9.5v14.5zM10.5 3v14M3 10.5h14" strokeWidth="1.5" /></svg></SmallTool>
        <PromptField>
          <label htmlFor="xy">X Y :</label>
          <input id="xy" />
        </PromptField>
        <SmallTool $framed aria-label="Alert"><svg viewBox="0 0 21 21" fill="none" stroke="#000"><rect x="2.5" y="1.5" width="16" height="18" /><path d="M10.5 4v8M10.5 14v3" strokeWidth="2" /></svg></SmallTool>
        <Prompt>&lt;M1&gt; - Select first area corner</Prompt>
        <UnitBox>
          <UnitFrame>
            <select aria-label="Units"><option>Inch</option><option>MM</option></select>
            <UnitMark />
          </UnitFrame>
        </UnitBox>
      </PromptRow>

      <StatusRow><Status>ss,#28,Pad(.smd,.bga,.geometry=CIR_0-25,.pad_usage=toeprint),X=0.72131,Y=0.7372,r11.94,POS</Status></StatusRow>
      <Edge />

      <TaskBar>
        <Orb aria-label="Start">
          <svg width="38" height="38" viewBox="0 0 38 38">
            <defs><radialGradient id="orb" cx="50%" cy="85%" r="80%"><stop offset="0" stopColor="#38d0f8" /><stop offset=".5" stopColor="#1c6aa8" /><stop offset="1" stopColor="#8aa8c0" /></radialGradient></defs>
            <circle cx="19" cy="19" r="18" fill="url(#orb)" stroke="#7aa0b8" />
            <path d="M12 10q4-3 8 0l-2 8q-4-3-8 0z" fill="#f06428" /><path d="M21 11q4 3 8 0l-2 8q-4 3-8 0z" fill="#98cc30" />
            <path d="M10 20q4-3 8 0l-2 8q-4-3-8 0z" fill="#48a8e8" /><path d="M19 21q4 3 8 0l-2 8q-4 3-8 0z" fill="#ffc830" />
          </svg>
        </Orb>
        {tasks.map((t) => <Task key={t.name} $on={t.on} $stack={t.stack} aria-label={t.name}>{t.icon}</Task>)}
        <Tray>
          <svg width="16" height="15" viewBox="0 0 16 15"><rect x=".5" y="6.5" width="15" height="8" fill="#ddd" stroke="#999" /><path d="M2 9h12M2 11h12M4 13h8" stroke="#555" strokeDasharray="1 1" /><path d="M8 6Q8 2 12 3Q15 3 15 0" fill="none" stroke="#ccc" /></svg>
          <svg width="16" height="16" viewBox="0 0 16 16"><circle cx="8" cy="8" r="7.3" fill="#1a2ec0" stroke="#c8d0f0" /><text x="8" y="12.5" fontSize="12" fontWeight="bold" textAnchor="middle" fill="#fff" fontFamily="Liberation Sans, sans-serif">?</text></svg>
          <svg width="9" height="18" viewBox="0 0 9 18"><path d="M2.5 1.5h6v4h-6zM.5 3.5h5v3h-5z" fill="#12305c" stroke="#fff" /><path d="M1 14h6l-3 3z" fill="#fff" /></svg>
          <svg width="8" height="5" viewBox="0 0 8 5"><path d="M0 5l4-4 4 4z" fill="#fff" /></svg>
          <svg width="16" height="16" viewBox="0 0 16 16"><path d="M1.5 1v14" stroke="#fff" strokeWidth="1.5" /><path d="M3 2h5l1 2h5v7H3z" fill="#fff" /><circle cx="11" cy="11" r="4.5" fill="#d82820" /><path d="M9 9l4 4M13 9l-4 4" stroke="#fff" strokeWidth="1.5" /></svg>
          <svg width="16" height="16" viewBox="0 0 16 16" fill="none" stroke="#fff"><path d="M1 6h3l4-4v12l-4-4H1z" fill="#ddd" /><path d="M10 6q1.5 2 0 4M12 4.5q2.5 3.5 0 7M14 3q3.5 5 0 10" /></svg>
          <svg width="16" height="16" viewBox="0 0 16 16" fill="none" stroke="#fff"><rect x="5.5" y="4.5" width="10" height="8" fill="#1c4a80" /><path d="M3.5 8v6.5H14M1.5 1v4q2 3 4 0V1" strokeWidth="1.5" /></svg>
          <TrayTime>17:06<br />2023/8/6</TrayTime>
          <ShowDesktop aria-label="Show desktop" />
        </Tray>
      </TaskBar>
    </Screen>
  );
}
